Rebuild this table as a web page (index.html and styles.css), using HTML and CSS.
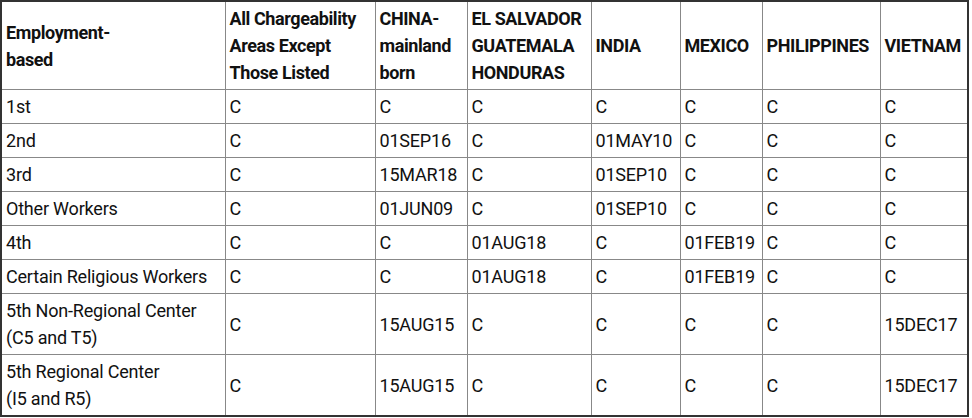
FILE: index.html
```html
<!DOCTYPE html>
<html>
<head>
<meta charset="utf-8">
<link rel="stylesheet" href="styles.css">
</head>
<body>
<table class="bulletin">
<colgroup>
<col class="c1"><col class="c2"><col class="c3"><col class="c4"><col class="c5"><col class="c6"><col class="c7"><col class="c8">
</colgroup>
<thead>
<tr>
<th>Employment-<br>based</th>
<th>All Chargeability Areas Except Those Listed</th>
<th>CHINA-<br>mainland born</th>
<th>EL SALVADOR GUATEMALA HONDURAS</th>
<th>INDIA</th>
<th>MEXICO</th>
<th>PHILIPPINES</th>
<th>VIETNAM</th>
</tr>
</thead>
<tbody>
<tr><td>1st</td><td>C</td><td>C</td><td>C</td><td>C</td><td>C</td><td>C</td><td>C</td></tr>
<tr><td>2nd</td><td>C</td><td>01SEP16</td><td>C</td><td>01MAY10</td><td>C</td><td>C</td><td>C</td></tr>
<tr><td>3rd</td><td>C</td><td>15MAR18</td><td>C</td><td>01SEP10</td><td>C</td><td>C</td><td>C</td></tr>
<tr><td>Other Workers</td><td>C</td><td>01JUN09</td><td>C</td><td>01SEP10</td><td>C</td><td>C</td><td>C</td></tr>
<tr><td>4th</td><td>C</td><td>C</td><td>01AUG18</td><td>C</td><td>01FEB19</td><td>C</td><td>C</td></tr>
<tr><td>Certain Religious Workers</td><td>C</td><td>C</td><td>01AUG18</td><td>C</td><td>01FEB19</td><td>C</td><td>C</td></tr>
<tr class="tall"><td>5th Non-Regional Center<br>(C5 and T5)</td><td>C</td><td>15AUG15</td><td>C</td><td>C</td><td>C</td><td>C</td><td>15DEC17</td></tr>
<tr class="tall"><td>5th Regional Center<br>(I5 and R5)</td><td>C</td><td>15AUG15</td><td>C</td><td>C</td><td>C</td><td>C</td><td>15DEC17</td></tr>
</tbody>
</table>
</body>
</html>
```
FILE: styles.css
```css
html, body {
  margin: 0;
  padding: 0;
  background: #fff;
}
.bulletin {
  border-collapse: collapse;
  table-layout: fixed;
  width: 967px;
  font-family: Roboto, "Liberation Sans", sans-serif;
  font-stretch: 90%;
  font-size: 18px;
  line-height: 27px;
  letter-spacing: -0.2px;
  color: #111;
  border: 2px solid #333;
}
.bulletin th,
.bulletin td {
  border: 1px solid #888;
  padding: 3px 3px 3px 4px;
  text-align: left;
  vertical-align: middle;
}
.bulletin th {
  font-weight: bold;
  letter-spacing: -0.4px;
}
.c1 { width: 224px; }
.c2 { width: 150px; }
.c3 { width: 92px; }
.c4 { width: 124px; }
.c5 { width: 89px; }
.c6 { width: 82px; }
.c7 { width: 118px; }
.c8 { width: 88px; }
```
